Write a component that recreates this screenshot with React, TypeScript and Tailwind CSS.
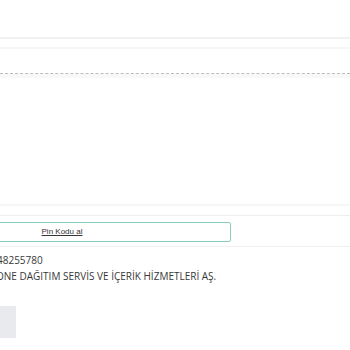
import React from "react";

export default function App() {
  return (
    <div className="w-[350px] h-[350px] overflow-hidden bg-white font-['Open_Sans',sans-serif] text-[#383838]">
      {/* header rules */}
      <div className="h-[37px]" />
      <div className="h-[2px] bg-[#f1f1f1]" />
      <div className="h-[8px]" />
      <div className="h-[2px] bg-[#f6f6f6]" />
      <div className="h-[24px]" />
      <div className="border-t border-dashed border-[#bdbdbd]" />
      <div className="h-[4px] bg-[#f8f8f8]" />

      {/* form area */}
      <div className="h-[126px]" />
      <div className="h-[3px] bg-gradient-to-b from-[#f3f3f3] to-white" />
      <div className="h-[8px]" />
      <div className="h-[1px] bg-[#eeeeee]" />
      <div className="h-[6px]" />
      <div className="flex">
        <button className="ml-[-107px] w-[338px] h-[20px] rounded-[2px] border border-[#86cdbf] bg-white flex items-center justify-center">
          <span className="font-['Liberation_Sans',sans-serif] text-[8px] underline text-[#333]">Pin Kodu al</span>
        </button>
      </div>
      <div className="h-[4px]" />
      <div className="h-[1px] bg-[#f0f0f0]" />

      {/* info text */}
      <div className="mt-[5px] ml-[-3px] text-[10px] leading-[16px] whitespace-nowrap">
        <div>48255780</div>
        <div className="ml-[-1px]">ONE DAĞITIM SERVİS VE İÇERİK HİZMETLERİ AŞ.</div>
      </div>

      <div className="mt-[22px] w-[16px] h-[32px] bg-[#e9eaee]" />
    </div>
  );
}
